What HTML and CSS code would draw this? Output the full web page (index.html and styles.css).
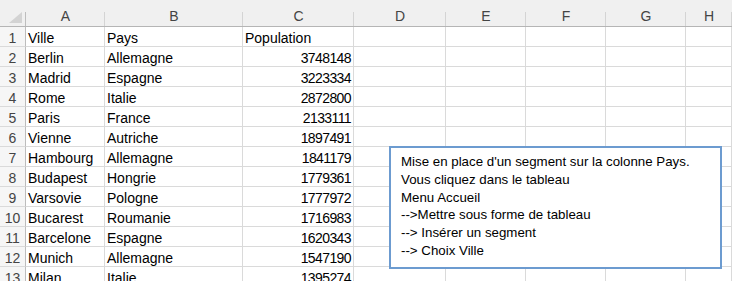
FILE: index.html
```html
<!DOCTYPE html>
<html lang="fr">
<head>
<meta charset="utf-8">
<title>Feuille</title>
<link rel="stylesheet" href="styles.css">
</head>
<body>
<div class="sheet">
  <div class="grid">
    <div class="hd corner"><svg class="tri" width="14" height="11" viewBox="0 0 14 11"><polygon points="0,11 13,11 13,0" fill="#d3d3d3"/></svg></div>
    <div class="hd col">A</div><div class="hd col">B</div><div class="hd col">C</div><div class="hd col">D</div><div class="hd col">E</div><div class="hd col">F</div><div class="hd col">G</div><div class="hd col">H</div>

    <div class="rh">1</div><div class="c">Ville</div><div class="c">Pays</div><div class="c">Population</div><div class="c"></div><div class="c"></div><div class="c"></div><div class="c"></div><div class="c"></div>
    <div class="rh">2</div><div class="c">Berlin</div><div class="c">Allemagne</div><div class="c n">3748148</div><div class="c"></div><div class="c"></div><div class="c"></div><div class="c"></div><div class="c"></div>
    <div class="rh">3</div><div class="c">Madrid</div><div class="c">Espagne</div><div class="c n">3223334</div><div class="c"></div><div class="c"></div><div class="c"></div><div class="c"></div><div class="c"></div>
    <div class="rh">4</div><div class="c">Rome</div><div class="c">Italie</div><div class="c n">2872800</div><div class="c"></div><div class="c"></div><div class="c"></div><div class="c"></div><div class="c"></div>
    <div class="rh">5</div><div class="c">Paris</div><div class="c">France</div><div class="c n">2133111</div><div class="c"></div><div class="c"></div><div class="c"></div><div class="c"></div><div class="c"></div>
    <div class="rh">6</div><div class="c">Vienne</div><div class="c">Autriche</div><div class="c n">1897491</div><div class="c"></div><div class="c"></div><div class="c"></div><div class="c"></div><div class="c"></div>
    <div class="rh">7</div><div class="c">Hambourg</div><div class="c">Allemagne</div><div class="c n">1841179</div><div class="c"></div><div class="c"></div><div class="c"></div><div class="c"></div><div class="c"></div>
    <div class="rh">8</div><div class="c">Budapest</div><div class="c">Hongrie</div><div class="c n">1779361</div><div class="c"></div><div class="c"></div><div class="c"></div><div class="c"></div><div class="c"></div>
    <div class="rh">9</div><div class="c">Varsovie</div><div class="c">Pologne</div><div class="c n">1777972</div><div class="c"></div><div class="c"></div><div class="c"></div><div class="c"></div><div class="c"></div>
    <div class="rh">10</div><div class="c">Bucarest</div><div class="c">Roumanie</div><div class="c n">1716983</div><div class="c"></div><div class="c"></div><div class="c"></div><div class="c"></div><div class="c"></div>
    <div class="rh">11</div><div class="c">Barcelone</div><div class="c">Espagne</div><div class="c n">1620343</div><div class="c"></div><div class="c"></div><div class="c"></div><div class="c"></div><div class="c"></div>
    <div class="rh">12</div><div class="c">Munich</div><div class="c">Allemagne</div><div class="c n">1547190</div><div class="c"></div><div class="c"></div><div class="c"></div><div class="c"></div><div class="c"></div>
    <div class="rh">13</div><div class="c">Milan</div><div class="c">Italie</div><div class="c n">1395274</div><div class="c"></div><div class="c"></div><div class="c"></div><div class="c"></div><div class="c"></div>
  </div>
  <div class="textbox">
    <div>Mise en place d'un segment sur la colonne Pays.</div>
    <div>Vous cliquez dans le tableau</div>
    <div>Menu Accueil</div>
    <div>--&gt;Mettre sous forme de tableau</div>
    <div>--&gt; Insérer un segment</div>
    <div>--&gt; Choix Ville</div>
  </div>
</div>
</body>
</html>
```
FILE: styles.css
```css
html, body {
  margin: 0;
  padding: 0;
  background: #ffffff;
}
body {
  width: 732px;
  height: 281px;
  overflow: hidden;
  font-family: "Liberation Sans", Arial, sans-serif;
}
.sheet {
  position: relative;
  width: 732px;
  height: 281px;
  overflow: hidden;
}
.grid {
  display: grid;
  grid-template-columns: 26px 79px 138px 111px 92px 80px 80px 80px 1fr;
  grid-template-rows: 27px repeat(13, 20px);
}
.hd {
  box-sizing: border-box;
  background-color: #f0f0f0;
  border-bottom: 1px solid #b5b5b5;
  color: #444444;
  font-size: 14px;
  line-height: 20px;
  padding-top: 6px;
  text-align: center;
}
.col {
  background-image: linear-gradient(#d4d4d4, #d4d4d4);
  background-repeat: no-repeat;
  background-position: right bottom;
  background-size: 1px 14px;
}
.corner {
  background-image: linear-gradient(#bdbdbd, #bdbdbd);
  background-repeat: no-repeat;
  background-position: right bottom;
  background-size: 1px 14px;
  padding-top: 12px;
  padding-left: 9px;
  text-align: left;
  line-height: 0;
}
.tri {
  display: block;
}
.rh {
  box-sizing: border-box;
  background: #f6f6f6;
  border-right: 1px solid #bdbdbd;
  border-bottom: 1px solid #dadada;
  color: #444444;
  font-size: 14px;
  line-height: 20px;
  padding-top: 1px;
  text-align: center;
}
.c {
  box-sizing: border-box;
  border-right: 1px solid #dadada;
  border-bottom: 1px solid #dadada;
  color: #000000;
  font-size: 14px;
  line-height: 20px;
  padding: 1px 2px 0 2px;
  white-space: nowrap;
  overflow: hidden;
}
.n {
  text-align: right;
  letter-spacing: -0.6px;
  padding-right: 2px;
}
.textbox {
  position: absolute;
  left: 389px;
  top: 146px;
  width: 333px;
  height: 123px;
  box-sizing: border-box;
  border: 2px solid #6c9bd0;
  background: #ffffff;
  padding: 5px 0 0 10px;
  font-size: 13.3px;
  line-height: 17.8px;
  color: #000000;
  white-space: nowrap;
}
```
